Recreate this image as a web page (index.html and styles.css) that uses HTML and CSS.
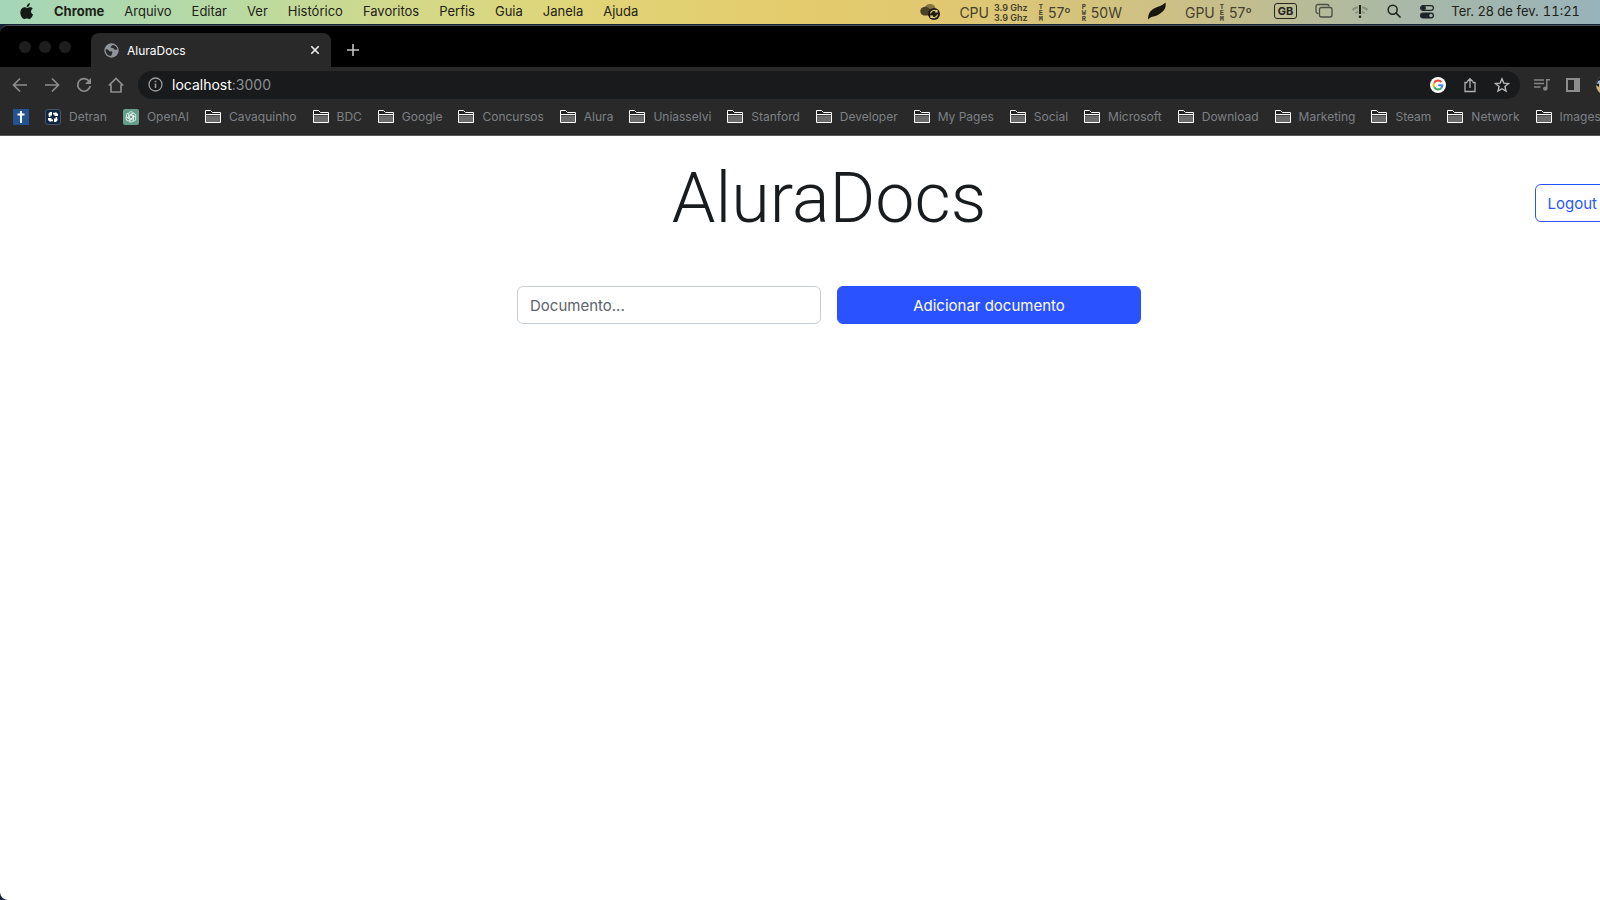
FILE: index.html
```html
<!DOCTYPE html>
<html lang="pt-BR">
<head>
<meta charset="utf-8">
<title>AluraDocs</title>
<link rel="stylesheet" href="styles.css">
</head>
<body>
<svg width="0" height="0" class="sprite" aria-hidden="true">
  <symbol id="folder" viewBox="0 0 16 14">
    <path d="M.5 13V1.500H5.500L7.500 3.500H15.500V13Z" fill="#202020"/>
    <path d="M1 5.500H15V12.500H1Z" fill="#6b6b6b"/>
    <path d="M.5 12.500V.5H5.500L7.500 2.500H15.500V12.500ZM.5 4.500H15.500" fill="none" stroke="#fff"/>
  </symbol>
</svg>

<header class="menubar">
  <nav class="menus">
    <button class="menu apple" aria-label="Apple"><svg width="14" height="17" viewBox="0 0 14 17"><path fill="#161a14" d="M9.9.3c.1 1-.3 1.900-.9 2.600-.6.7-1.500 1.200-2.300 1.100-.1-.9.300-1.900.9-2.500C8.200.8 9.100.3 9.900.3ZM12.700 5.700c-1.100.7-1.700 1.600-1.700 2.800 0 1.400.8 2.500 2.100 3-.3.900-.8 1.800-1.300 2.600-.7 1-1.300 1.900-2.400 1.900-1 0-1.400-.6-2.600-.6s-1.600.6-2.600.6c-1 0-1.800-1-2.500-2C.2 11.800-.2 8.500 1.200 6.300c.8-1.300 2.100-2 3.300-2 1.200 0 2 .7 2.800.7.800 0 1.800-.8 3.200-.7.600 0 1.600.2 2.200 1.400Z"/></svg></button>
    <button class="menu app">Chrome</button>
    <button class="menu">Arquivo</button>
    <button class="menu">Editar</button>
    <button class="menu">Ver</button>
    <button class="menu">Histórico</button>
    <button class="menu">Favoritos</button>
    <button class="menu">Perfis</button>
    <button class="menu">Guia</button>
    <button class="menu">Janela</button>
    <button class="menu">Ajuda</button>
  </nav>
  <div class="status">
    <svg width="22" height="18" viewBox="0 0 22 18"><path d="M6 5a5.500 5 0 0 1 10.500 1.500l-5 3Z" fill="#85743f"/><path d="M5 13.500A4.300 4.300 0 0 1 3.500 5.500C7 3.500 10.500 6.500 13 8.500L10 13.500Z" fill="#4a4128"/><circle cx="15" cy="12" r="6" fill="#1c1a12"/><path d="M11.500 11.500a3.700 3.700 0 0 1 6.500-1.800V8M18 10H16M18.500 12.500a3.700 3.700 0 0 1-6.500 1.800V16M12 14.200h2" fill="none" stroke="#e0cb72" stroke-width="1.200"/></svg>
    <div class="sensor cpu">
      <span>CPU</span>
      <span class="freq">3.9 Ghz<br>3.9 Ghz</span>
      <span class="tiny spaced">T<br>E<br>M</span><span>57º</span>
      <span class="tiny spaced">P<br>W<br>R</span><span>50W</span>
    </div>
    <svg width="20" height="18" viewBox="0 0 20 18"><path d="M1 17.500C1 11 4 8 8 6S16 3.500 18.500.5C19.500 6 17 9 12.500 12S4 14 1 17.500Z" fill="#17160f"/></svg>
    <div class="sensor">
      <span>GPU</span>
      <span class="tiny">T<br>E<br>M</span><span>57º</span>
    </div>
    <span class="layout">GB</span>
    <svg width="18" height="16" viewBox="0 0 18 16"><path d="M3.500 10.500H3A2 2 0 0 1 1 8.500V3.500a2 2 0 0 1 2-2h9a2 2 0 0 1 2 2" fill="none" stroke="#4b4e43" stroke-width="1.300"/><rect x="4.500" y="4.500" width="12.500" height="9.500" rx="2" fill="none" stroke="#4b4e43" stroke-width="1.300"/></svg>
    <svg width="18" height="15" viewBox="0 0 18 15"><path d="M1.500 6a11 11 0 0 1 15 0M4.500 9.200a6.500 6.500 0 0 1 9 0" fill="none" stroke="#8c917c" stroke-width="2"/><path d="M9 1.500v8" stroke="#a9b094" stroke-width="4.500"/><path d="M9 1v9" stroke="#20221c" stroke-width="2"/><circle cx="9" cy="12.800" r="1.300" fill="#20221c"/></svg>
    <svg width="14" height="14" viewBox="0 0 14 14"><circle cx="5.700" cy="5.700" r="4.500" fill="none" stroke="#1d211d" stroke-width="1.500"/><path d="m9 9 4 4" stroke="#1d211d" stroke-width="1.700" stroke-linecap="round"/></svg>
    <svg width="16" height="15" viewBox="0 0 16 15"><rect x="1.600" y="1.600" width="12.800" height="4.800" rx="2.400" fill="none" stroke="#1d2326" stroke-width="1.200"/><rect x="2" y="2" width="5" height="4" rx="2" fill="#1d2326"/><rect x="1" y="8.500" width="14" height="6" rx="3" fill="#1d2326"/><circle cx="12" cy="11.500" r="1.700" fill="#a0b2ae"/></svg>
    <div class="clock"><span>Ter. 28 de fev.</span><span class="time">11:21</span></div>
  </div>
</header>

<div class="browser">
  <div class="tabstrip">
    <span class="light"></span><span class="light"></span><span class="light"></span>
    <div class="tab">
      <svg width="15" height="15" viewBox="0 0 15 15"><circle cx="7.500" cy="7.500" r="7.200" fill="#8f949b"/><path d="M1.700 6.300C3.500 6 5 7 5 8.300h2.300c1 0 1.200.8 1 1.700L7 12.900C3.800 13 1.200 10 1.700 6.300ZM8.800 2c-.6 1-2.100 1-2.100 2.200 0 1 1.400.7 2.500 1 .8.300.8 1.500 1.800 1.500l2.500-.3c-.3-2-2.300-4.100-4.700-4.400Z" fill="#292929"/></svg>
      <span class="tab-title">AluraDocs</span>
      <button class="plain" aria-label="Fechar guia"><svg width="10" height="10" viewBox="0 0 10 10"><path d="m1.300 1.300 7.400 7.400m0-7.400L1.300 8.700" stroke="#f0f0f0" stroke-width="1.600"/></svg></button>
    </div>
    <button class="plain newtab" aria-label="Nova guia"><svg width="12" height="12" viewBox="0 0 12 12"><path d="M6 0v12M0 6h12" stroke="#c4c4c4" stroke-width="1.600"/></svg></button>
  </div>

  <div class="toolbar">
    <button class="plain" aria-label="Voltar"><svg width="16" height="16" viewBox="0 0 16 16"><path d="M15 8H2M8 1.500 1.500 8 8 14.500" fill="none" stroke="#8d8d8d" stroke-width="1.700"/></svg></button>
    <button class="plain" aria-label="Avançar"><svg width="16" height="16" viewBox="0 0 16 16"><path d="M1 8h13M8 1.500 14.500 8 8 14.500" fill="none" stroke="#8d8d8d" stroke-width="1.700"/></svg></button>
    <button class="plain" aria-label="Recarregar"><svg width="16" height="16" viewBox="0 0 16 16"><path d="M13.300 4.500A6.300 6.300 0 1 0 14.200 9" fill="none" stroke="#8d8d8d" stroke-width="1.700"/><path d="M15 1v6H9Z" fill="#8d8d8d"/></svg></button>
    <button class="plain" aria-label="Página inicial"><svg width="16" height="16" viewBox="0 0 16 16"><path d="M3 7.500V15h10V7.500M.8 8.500 8 1.500l7.200 7" fill="none" stroke="#8d8d8d" stroke-width="1.700"/></svg></button>
    <div class="address">
      <svg width="15" height="15" viewBox="0 0 15 15"><circle cx="7.500" cy="7.500" r="6.500" fill="none" stroke="#9a9da1" stroke-width="1.300"/><path d="M7.500 6.500v4.500M7.500 3.700v1.600" stroke="#9a9da1" stroke-width="1.600"/></svg>
      <span class="url">localhost<span class="port">:3000</span></span>
      <svg width="16" height="16" viewBox="0 0 16 16"><circle cx="8" cy="8" r="8" fill="#fff"/><g fill="none" stroke-width="2"><path d="M4.200 5.800A4.500 4.500 0 0 1 11.400 5" stroke="#ea4335"/><path d="M4.200 10.200a4.500 4.500 0 0 1 0-4.400" stroke="#fbbc05"/><path d="M11.100 11.300a4.500 4.500 0 0 1-6.900-1.100" stroke="#34a853"/><path d="M8.200 8.200h4.200a4.500 4.500 0 0 1-1.400 3.200" stroke="#4285f4"/></g></svg>
      <button class="plain" aria-label="Compartilhar"><svg width="16" height="16" viewBox="0 0 16 16"><path d="M5.500 5.500h-2.500v9h10v-9h-2.500M8 11V1.800M5.200 4.500 8 1.700l2.800 2.800" fill="none" stroke="#b0b0b0" stroke-width="1.300"/></svg></button>
      <button class="plain" aria-label="Favoritar"><svg width="16" height="16" viewBox="0 0 16 16"><path d="m8 1.800 1.800 4.300 4.700.4-3.600 3 1.100 4.600L8 11.700l-4 2.400 1.100-4.600-3.600-3 4.700-.4Z" fill="none" stroke="#b8b8b8" stroke-width="1.400"/></svg></button>
    </div>
    <button class="plain" aria-label="Mídia"><svg width="16" height="14" viewBox="0 0 16 14"><path d="M0 2h10M0 5.500h10M0 9h6.500M12.800 10.500V1.800H16" fill="none" stroke="#858585" stroke-width="1.500"/><circle cx="11.300" cy="10.600" r="2.200" fill="#858585"/></svg></button>
    <button class="plain" aria-label="Painel lateral"><svg width="14" height="14" viewBox="0 0 14 14"><path d="M1 1h12v12H1Z" fill="none" stroke="#8d8d8d" stroke-width="2"/><path d="M8 0h6v14H8Z" fill="#8d8d8d"/></svg></button>
    <button class="plain" aria-label="Perfil"><svg width="20" height="20" viewBox="0 0 20 20"><circle cx="10" cy="10" r="10" fill="#c9b583"/><path d="M0 10A10 10 0 0 1 10 0v5L3 8v4Z" fill="#1a1c22"/><path d="m2 6 6-2v4L1 9Z" fill="#9fb9dc"/></svg></button>
  </div>

  <nav class="bookmarks">
    <a href="#" aria-label="Igreja"><svg width="16" height="16" viewBox="0 0 16 16"><path d="M0 0h16v16H0Z" fill="#235390"/><path d="M8 2v12M4.500 5.500h7" stroke="#fff" stroke-width="2"/></svg></a>
    <a href="#"><svg width="16" height="16" viewBox="0 0 16 16"><rect x=".5" y=".5" width="15" height="15" rx="2.500" fill="#102541" stroke="#475465"/><g fill="#fff"><path id="blade" d="M7 3v3.500H5.400V8H3.800V5.500H2.800L5 3Z"/><use href="#blade" transform="rotate(90 8 8)"/><use href="#blade" transform="rotate(180 8 8)"/><use href="#blade" transform="rotate(270 8 8)"/></g></svg>Detran</a>
    <a href="#"><svg width="16" height="16" viewBox="0 0 16 16"><rect width="16" height="16" rx="2" fill="#659f8b"/><g fill="none" stroke="#eaf3f0" stroke-width=".9"><path id="petal" d="M5.600 9.500V5.200a2.600 2.600 0 0 1 4.900-1.100M5.600 6.600 9 4.600a2.600 2.600 0 0 1 3.700 3"/><use href="#petal" transform="rotate(120 8 8)"/><use href="#petal" transform="rotate(240 8 8)"/><path d="m8 6.200 1.600.9v1.800L8 9.800l-1.600-.9V7.100Z"/></g></svg>OpenAI</a>
    <a href="#"><svg width="16" height="14"><use href="#folder"/></svg>Cavaquinho</a>
    <a href="#"><svg width="16" height="14"><use href="#folder"/></svg>BDC</a>
    <a href="#"><svg width="16" height="14"><use href="#folder"/></svg>Google</a>
    <a href="#"><svg width="16" height="14"><use href="#folder"/></svg>Concursos</a>
    <a href="#"><svg width="16" height="14"><use href="#folder"/></svg>Alura</a>
    <a href="#"><svg width="16" height="14"><use href="#folder"/></svg>Uniasselvi</a>
    <a href="#"><svg width="16" height="14"><use href="#folder"/></svg>Stanford</a>
    <a href="#"><svg width="16" height="14"><use href="#folder"/></svg>Developer</a>
    <a href="#"><svg width="16" height="14"><use href="#folder"/></svg>My Pages</a>
    <a href="#"><svg width="16" height="14"><use href="#folder"/></svg>Social</a>
    <a href="#"><svg width="16" height="14"><use href="#folder"/></svg>Microsoft</a>
    <a href="#"><svg width="16" height="14"><use href="#folder"/></svg>Download</a>
    <a href="#"><svg width="16" height="14"><use href="#folder"/></svg>Marketing</a>
    <a href="#"><svg width="16" height="14"><use href="#folder"/></svg>Steam</a>
    <a href="#"><svg width="16" height="14"><use href="#folder"/></svg>Network</a>
    <a href="#"><svg width="16" height="14"><use href="#folder"/></svg>Images</a>
  </nav>

  <main class="page">
    <div class="heading">
      <h1>AluraDocs</h1>
      <button class="btn logout">Logout</button>
    </div>
    <form class="add-form">
      <input type="text" placeholder="Documento..." aria-label="Documento">
      <button type="button" class="btn primary">Adicionar documento</button>
    </form>
  </main>
</div>
</body>
</html>
```
FILE: styles.css
```css
* { box-sizing: border-box; }

body {
  margin: 0;
  height: 100vh;
  display: flex;
  flex-direction: column;
  overflow: hidden;
  background: #12233a;
  font-family: Inter, "Liberation Sans", sans-serif;
}

button, input { font: inherit; }
svg { display: block; flex: none; }
.sprite { position: absolute; }

.plain {
  display: flex;
  padding: 0;
  border: 0;
  background: none;
}

/* System menu bar */
.menubar {
  flex: none;
  height: 24px;
  display: flex;
  align-items: center;
  justify-content: space-between;
  padding: 0 20px 2px;
  white-space: nowrap;
  font-size: 13px;
  color: #1f2219;
  background: linear-gradient(90deg, #a5d6b8 0%, #b8daa4 14%, #d2d98a 25%, #e0d578 36%, #e4cb6c 50%, #e0c873 60%, #c9bf88 75%, #a9b8a8 88%, #98b3ba 100%);
}

.menus { display: flex; align-items: center; gap: 20px; }
.menu { padding: 0; border: 0; background: none; color: inherit; line-height: 22px; }
.app { font-weight: 700; }

.status { display: flex; align-items: center; gap: 18px; }
.sensor {
  display: flex;
  align-items: center;
  gap: 5px;
  padding: 3px 4px 0 0;
  font-size: 14px;
  color: #45412c;
}
.cpu { padding-right: 7px; }
.freq { font-size: 9px; line-height: 10px; font-weight: 600; }
.tiny { font-family: "Liberation Mono", monospace; font-size: 7px; line-height: 6px; font-weight: 700; }
.spaced { padding-left: 6px; }
.layout {
  padding: 0 3px;
  border: 1px solid #25261c;
  border-radius: 3px;
  font-size: 11px;
  line-height: 14px;
  font-weight: 700;
}
.clock { display: flex; gap: 4px; margin-left: -2px; }
.time { font-variant-numeric: tabular-nums; }

/* Browser window, wider than the screen */
.browser {
  flex: 1;
  width: calc(100% + 58px);
  margin-top: 1px;
  display: flex;
  flex-direction: column;
  overflow: hidden;
  border-top: 1px solid #4a4a4a;
  border-radius: 8px;
  background: #292929;
}

.tabstrip {
  flex: none;
  height: 41px;
  display: flex;
  align-items: center;
  gap: 8px;
  padding-left: 19px;
  background: #000;
}
.light { width: 12px; height: 12px; border-radius: 50%; background: #1e1e1e; }
.tab {
  align-self: flex-end;
  width: 240px;
  height: 34px;
  margin-left: 12px;
  padding: 0 11px 0 13px;
  display: flex;
  align-items: center;
  gap: 8px;
  border-radius: 8px 8px 0 0;
  background: #292929;
  color: #fff;
  font-size: 12px;
}
.tab-title { flex: 1; }
.newtab { margin: 6px 0 0 8px; }

.toolbar {
  flex: none;
  height: 36px;
  display: flex;
  align-items: center;
  gap: 16px;
  padding: 0 42px 1px 12px;
}
.address {
  flex: 1;
  height: 28px;
  margin: 0 -2px;
  padding: 0 10px;
  display: flex;
  align-items: center;
  gap: 16px;
  border-radius: 14px;
  background: #191a1c;
}
.url { flex: 1; margin-left: -7px; font-size: 14px; color: #fff; }
.port { color: #8b8d90; }

.bookmarks {
  flex: none;
  height: 33px;
  display: flex;
  align-items: center;
  gap: 16px;
  padding: 0 13px 5px;
  white-space: nowrap;
  border-bottom: 1px solid #575757;
  font-size: 12px;
}
.bookmarks a {
  display: flex;
  align-items: center;
  gap: 8px;
  color: #7d8186;
  text-decoration: none;
}

/* Page */
.page { flex: 1; background: #fff; }
.heading {
  display: grid;
  grid-template-columns: 1fr auto 1fr;
  align-items: center;
  padding: 24px 48px;
}
h1 {
  grid-column: 2;
  margin: 0 0 10px;
  font-family: Roboto, Inter, sans-serif;
  font-size: 70px;
  line-height: 76px;
  font-weight: 300;
  color: #191c1f;
}
.btn {
  height: 38px;
  padding: 0 12px;
  border: 1px solid #2b52ff;
  border-radius: 6px;
  font-size: 15px;
}
.logout { justify-self: end; background: #fff; color: #2b57f0; }
.primary { background: #2b52ff; color: #fff; }
.add-form {
  display: grid;
  grid-template-columns: 1fr 1fr;
  gap: 16px;
  max-width: 624px;
  margin: 16px auto 0;
}
.add-form input {
  min-width: 0;
  height: 38px;
  padding: 0 12px;
  border: 1px solid #c7cdd4;
  border-radius: 6px;
  font-size: 15px;
}
.add-form input::placeholder { color: #5b636b; opacity: 1; }
```
